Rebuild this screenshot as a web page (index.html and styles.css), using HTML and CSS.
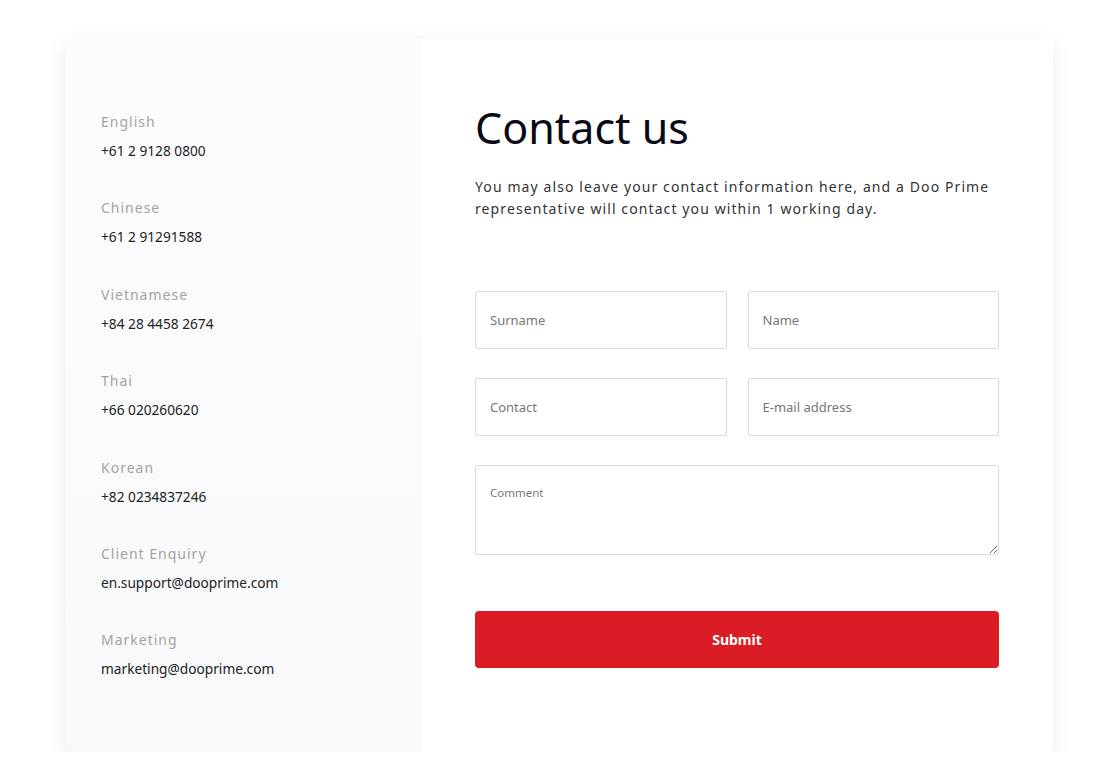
FILE: index.html
```html
<!DOCTYPE html>
<html lang="en">
<head>
<meta charset="utf-8">
<title>Contact us</title>
<link rel="stylesheet" href="styles.css">
</head>
<body>
<div class="card">
  <aside class="info">
    <div class="group"><div class="label">English</div><div class="value">+61 2 9128 0800</div></div>
    <div class="group"><div class="label">Chinese</div><div class="value">+61 2 91291588</div></div>
    <div class="group"><div class="label">Vietnamese</div><div class="value">+84 28 4458 2674</div></div>
    <div class="group"><div class="label">Thai</div><div class="value">+66 020260620</div></div>
    <div class="group"><div class="label">Korean</div><div class="value">+82 0234837246</div></div>
    <div class="group"><div class="label">Client Enquiry</div><div class="value">en.support@dooprime.com</div></div>
    <div class="group"><div class="label">Marketing</div><div class="value">marketing@dooprime.com</div></div>
  </aside>
  <main class="form-area">
    <h1 class="title">Contact us</h1>
    <p class="desc">You may also leave your contact information here, and a Doo Prime representative will contact you within 1 working day.</p>
    <form class="form">
      <div class="row">
        <input class="field" type="text" placeholder="Surname">
        <input class="field" type="text" placeholder="Name">
      </div>
      <div class="row">
        <input class="field" type="text" placeholder="Contact">
        <input class="field" type="text" placeholder="E-mail address">
      </div>
      <textarea class="comment" placeholder="Comment"></textarea>
      <button class="submit" type="button">Submit</button>
    </form>
  </main>
</div>
</body>
</html>
```
FILE: styles.css
```css
html, body {
  margin: 0;
  padding: 0;
  background: #ffffff;
}
body {
  font-family: "Noto Sans", "Open Sans", sans-serif;
  padding: 39px 0 0 65px;
}
.card {
  width: 988px;
  height: 713px;
  display: flex;
  background: #ffffff;
  border-radius: 4px;
  box-shadow: 0 6px 22px rgba(0, 0, 0, 0.08);
  overflow: hidden;
}
.info {
  width: 356px;
  flex: none;
  box-sizing: border-box;
  padding: 73px 0 0 36px;
  background: linear-gradient(180deg, #fbfcfd 0%, #f8f9fb 100%);
  display: flex;
  flex-direction: column;
  gap: 37.4px;
}
.label {
  font-size: 14px;
  line-height: 20px;
  color: #a3a3a3;
  letter-spacing: 1px;
}
.value {
  margin-top: 9px;
  font-size: 13.7px;
  line-height: 20px;
  color: #222222;
}
.form-area {
  flex: 1;
  padding: 0 54px;
}
.title {
  margin: 59px 0 0;
  font-size: 43px;
  font-weight: 400;
  line-height: 60px;
  color: #0a0a14;
}
.desc {
  margin: 18px 0 0;
  font-size: 14px;
  line-height: 22px;
  letter-spacing: 1.1px;
  color: #333333;
}
.form {
  margin-top: 71px;
  display: flex;
  flex-direction: column;
}
.row {
  display: flex;
  gap: 21px;
  margin-bottom: 29px;
}
.field {
  flex: 1;
  min-width: 0;
  height: 58px;
  box-sizing: border-box;
  border: 1px solid #dcdcdc;
  border-radius: 2px;
  padding: 0 14px;
  font-family: inherit;
  font-size: 13px;
  color: #333;
  background: #fff;
  outline: none;
}
.field::placeholder, .comment::placeholder {
  color: #777777;
}
.comment {
  height: 90px;
  box-sizing: border-box;
  border: 1px solid #dcdcdc;
  border-radius: 2px;
  padding: 19px 14px;
  font-family: inherit;
  font-size: 11.5px;
  color: #333;
  outline: none;
}
.submit {
  margin-top: 56px;
  height: 57px;
  border: none;
  border-radius: 4px;
  background: #dc1c24;
  color: #ffffff;
  font-family: inherit;
  font-size: 14px;
  font-weight: 700;
  cursor: pointer;
}
```
